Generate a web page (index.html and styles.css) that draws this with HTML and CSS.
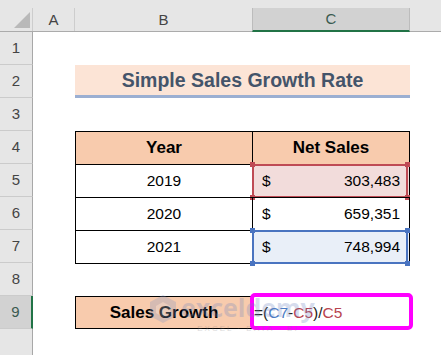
FILE: index.html
```html
<!DOCTYPE html>
<html>
<head>
<meta charset="utf-8">
<link rel="stylesheet" href="styles.css">
</head>
<body>
<div class="sheet">
  <div class="colhead">
    <div class="corner"><svg width="33" height="23" viewBox="0 0 33 23"><polygon points="30,4 30,20 14,20" fill="#b9b9b9"/></svg></div>
    <div class="ch a">A</div>
    <div class="ch b">B</div>
    <div class="ch c">C</div>
    <div class="ch rest"></div>
  </div>

  <div class="row"><div class="rh">1</div></div>
  <div class="row">
    <div class="rh">2</div><div class="sp"></div>
    <div class="title">Simple Sales Growth Rate</div>
  </div>
  <div class="row"><div class="rh">3</div></div>
  <div class="row">
    <div class="rh">4</div><div class="sp"></div>
    <div class="cell b head">Year</div>
    <div class="cell c head">Net Sales</div>
  </div>
  <div class="row">
    <div class="rh">5</div><div class="sp"></div>
    <div class="cell b">2019</div>
    <div class="cell c money sel-red"><span>$</span><span>303,483</span>
      <div class="selbox red"><i class="h tl"></i><i class="h tr"></i><i class="h bl"></i><i class="h br"></i></div>
    </div>
  </div>
  <div class="row">
    <div class="rh">6</div><div class="sp"></div>
    <div class="cell b">2020</div>
    <div class="cell c money"><span>$</span><span>659,351</span></div>
  </div>
  <div class="row">
    <div class="rh">7</div><div class="sp"></div>
    <div class="cell b last">2021</div>
    <div class="cell c money last sel-blue"><span>$</span><span>748,994</span>
      <div class="selbox blue"><i class="h tl"></i><i class="h tr"></i><i class="h bl"></i><i class="h br"></i></div>
    </div>
  </div>
  <div class="row"><div class="rh">8</div></div>
  <div class="row">
    <div class="rh active">9</div><div class="sp"></div>
    <div class="cell b head solo">Sales Growth</div>
    <div class="cell c formula solo">=(<span class="fb">C7</span>-<span class="fr">C5</span>)/<span class="fr">C5</span>
      <div class="hilite"></div>
    </div>
  </div>
  <div class="row rest"><div class="rh end"></div></div>

  <div class="watermark">
    <svg class="wm-icon" width="28" height="30" viewBox="0 0 28 30"><polygon points="14,1 27,8 27,22 14,29 1,22 1,8" fill="#7f93c4"/><polygon points="14,8 21,12 21,19 14,23 7,19 7,12" fill="#ffffff" opacity="0.6"/></svg>
    <div class="wm-text">
      <div class="wm-name">exceldemy</div>
      <div class="wm-tag">EXCEL · DATA · BI</div>
    </div>
  </div>
</div>
</body>
</html>
```

FILE: styles.css
```css
html, body {
  margin: 0;
  padding: 0;
  background: #ffffff;
}
body {
  width: 441px;
  height: 355px;
  overflow: hidden;
  font-family: "Liberation Sans", Arial, sans-serif;
  color: #000;
}
.sheet {
  position: relative;
  width: 441px;
  height: 355px;
  display: flex;
  flex-direction: column;
}
.colhead {
  display: flex;
  height: 32px;
  flex: none;
  box-sizing: border-box;
  padding-top: 8px;
  background: #e6e6e6;
  border-bottom: 1px solid #ababab;
}
.corner {
  width: 33px;
  height: 23px;
  box-sizing: border-box;
  border-right: 1px solid #cdcdcd;
}
.corner svg { display: block; }
.ch {
  height: 23px;
  line-height: 23px;
  box-sizing: border-box;
  text-align: center;
  font-size: 15px;
  color: #444;
}
.ch.a { width: 42px; border-right: 1px solid #cdcdcd; }
.ch.b { width: 177px; }
.ch.c {
  width: 158px;
  height: 24px;
  margin-bottom: -1px;
  background: #d2d2d2;
  border-left: 1px solid #bcbcbc;
  border-right: 1px solid #bcbcbc;
  border-bottom: 2px solid #217346;
  line-height: 22px;
  color: #3a5a50;
}
.ch.rest { flex: 1; }

.row {
  display: flex;
  height: 33px;
  flex: none;
}
.row.rest { flex: 1; height: auto; }
.rh {
  width: 33px;
  flex: none;
  box-sizing: border-box;
  background: #e6e6e6;
  border-right: 1px solid #a8a8a8;
  border-bottom: 1px solid #cbcbcb;
  text-align: center;
  line-height: 32px;
  font-size: 15px;
  color: #444;
}
.rh.active {
  background: #d2d2d2;
  border-right: 2px solid #217346;
  color: #3a5a50;
}
.rh.end { border-bottom: none; }
.sp { width: 42px; flex: none; }

.title {
  width: 335px;
  box-sizing: border-box;
  background: #fce4d6;
  border-bottom: 3px solid #9bafd2;
  text-align: center;
  font-weight: bold;
  font-size: 19.5px;
  line-height: 30px;
  color: #44546a;
}

.cell {
  position: relative;
  box-sizing: border-box;
  height: 33px;
  border-top: 1px solid #000;
  border-left: 1px solid #000;
  font-size: 15.5px;
  line-height: 32px;
}
.cell.b { width: 177px; text-align: center; }
.cell.c { width: 158px; border-right: 1px solid #000; }
.cell.head {
  background: #f8cbad;
  font-weight: bold;
  font-size: 17px;
  text-align: center;
}
.cell.last { box-shadow: 0 1px 0 #000; }
.cell.solo { border-bottom: 1px solid #000; }
.money {
  display: flex;
  justify-content: space-between;
  padding: 0 9px 0 9px;
}
.sel-red { background: #f2dcdb; }
.sel-blue { background: #e9eff8; }

.selbox {
  position: absolute;
  left: -1px;
  top: -1px;
  right: 1px;
  bottom: -1px;
  border: 2px solid;
}
.selbox.red { border-color: #bf4b55; }
.selbox.blue { border-color: #4a74c0; }
.h {
  position: absolute;
  width: 5px;
  height: 5px;
}
.red .h { background: #bf4b55; }
.blue .h { background: #4a74c0; }
.h.tl { left: -4px; top: -4px; }
.h.tr { right: -4px; top: -4px; }
.h.bl { left: -4px; bottom: -4px; }
.h.br { right: -4px; bottom: -4px; }

.formula {
  padding-left: 1px;
  font-size: 15.5px;
  line-height: 31px;
  color: #222;
}
.fb { color: #4a7bc4; }
.fr { color: #b8434f; }
.hilite {
  position: absolute;
  left: -3px;
  top: -4px;
  right: -4px;
  bottom: -2px;
  border: 4px solid #ff00ff;
  border-radius: 5px;
}

.watermark {
  position: absolute;
  left: 149px;
  top: 292px;
  display: flex;
  align-items: flex-start;
  gap: 4px;
  opacity: 0.28;
  pointer-events: none;
}
.wm-icon { margin-top: 2px; }
.wm-text { display: flex; flex-direction: column; align-items: center; }
.wm-name {
  font-family: "Open Sans", "Liberation Sans", sans-serif;
  font-weight: bold;
  font-size: 25px;
  line-height: 30px;
  color: #6f86bf;
}
.wm-tag {
  font-size: 8px;
  letter-spacing: 2px;
  line-height: 10px;
  color: #7a7a7a;
  margin-top: 2px;
}
```
